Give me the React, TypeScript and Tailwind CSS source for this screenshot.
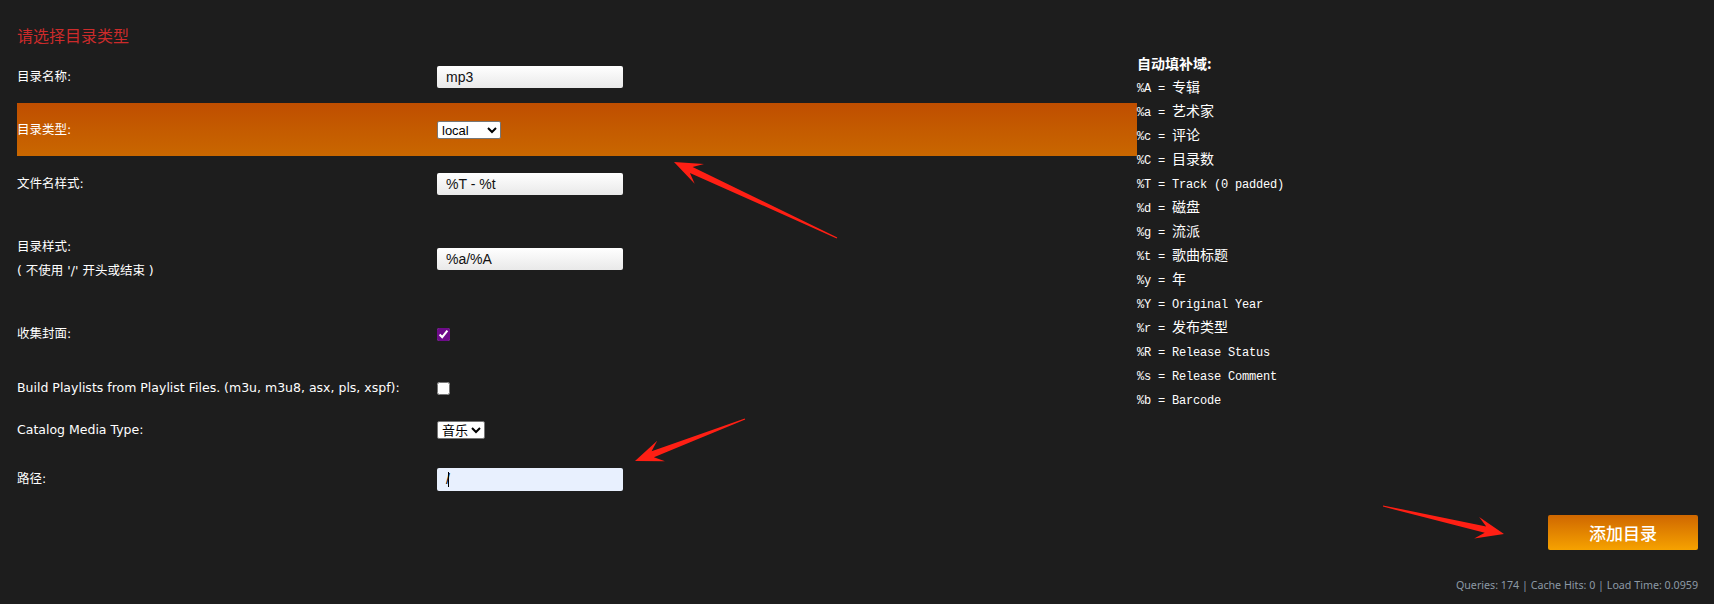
import type { ReactNode } from "react";
import clsx from "clsx";

const fields: [string, string][] = [
  ["%A", "专辑"],
  ["%a", "艺术家"],
  ["%c", "评论"],
  ["%C", "目录数"],
  ["%T", "Track (0 padded)"],
  ["%d", "磁盘"],
  ["%g", "流派"],
  ["%t", "歌曲标题"],
  ["%y", "年"],
  ["%Y", "Original Year"],
  ["%r", "发布类型"],
  ["%R", "Release Status"],
  ["%s", "Release Comment"],
  ["%b", "Barcode"],
];

const isCjk = (s: string) => /[\u4e00-\u9fff]/.test(s);

function Row({
  label,
  height,
  highlight,
  children,
}: {
  label: ReactNode;
  height: string;
  highlight?: boolean;
  children: ReactNode;
}) {
  return (
    <div
      className={clsx(
        "flex items-center",
        height,
        highlight && "bg-linear-to-b from-[#bf4e00] to-[#c96700]"
      )}
    >
      <div className="w-[420px] leading-[24px]">{label}</div>
      <div className="flex items-center">{children}</div>
    </div>
  );
}

function TextBox({ value }: { value: string }) {
  return (
    <input
      defaultValue={value}
      className="w-[186px] h-[22px] rounded-[2px] bg-linear-to-b from-white to-[#e9e9e9] pl-[9px] text-[14px] text-[#111] font-['Liberation_Sans',sans-serif] outline-none"
    />
  );
}

// arrow drawn like a screenshot annotation: thin tail, notched head
function arrowPoints(x1: number, y1: number, x2: number, y2: number) {
  const len = Math.hypot(x2 - x1, y2 - y1);
  const ux = (x2 - x1) / len;
  const uy = (y2 - y1) / len;
  const nx = -uy;
  const ny = ux;
  const L = 28;
  const W = 11;
  const neck = L * 0.68;
  const sw = 3.2;
  const tw = 0.6;
  const pt = (bx: number, by: number, along: number, side: number) =>
    `${(bx - ux * along + nx * side).toFixed(1)},${(by - uy * along + ny * side).toFixed(1)}`;
  return [
    pt(x1, y1, 0, tw),
    pt(x2, y2, neck, sw),
    pt(x2, y2, L, W),
    `${x2},${y2}`,
    pt(x2, y2, L, -W),
    pt(x2, y2, neck, -sw),
    pt(x1, y1, 0, -tw),
  ].join(" ");
}

export default function App() {
  return (
    <div className="relative w-[1714px] h-[604px] overflow-hidden bg-[#1d1d1d] text-white text-[12.5px] font-['DejaVu_Sans','Noto_Sans_CJK_SC',sans-serif]">
      <div className="flex">
        <div className="w-[1120px] ml-[17px]">
          <h2 className="h-[50px] pt-[25px] text-[16px] leading-[20px] text-[#cc2b2b] font-['Noto_Sans_CJK_SC',sans-serif]">
            请选择目录类型
          </h2>
          <Row label="目录名称:" height="h-[53px]">
            <TextBox value="mp3" />
          </Row>
          <Row label="目录类型:" height="h-[53px]" highlight>
            <select
              defaultValue="local"
              className="w-[64px] h-[18px] rounded-[2px] border border-[#767676] bg-white text-[13px] text-black font-['Liberation_Sans',sans-serif]"
            >
              <option value="local">local</option>
              <option value="remote">remote</option>
            </select>
          </Row>
          <Row label="文件名样式:" height="h-[56px]">
            <TextBox value="%T - %t" />
          </Row>
          <Row
            label={
              <>
                <div>目录样式:</div>
                <div>( 不使用 '/' 开头或结束 )</div>
              </>
            }
            height="h-[94px]"
          >
            <TextBox value="%a/%A" />
          </Row>
          <Row label="收集封面:" height="h-[56px]">
            <input type="checkbox" defaultChecked className="m-0 w-[13px] h-[13px] accent-[#6e0b8a]" />
          </Row>
          <Row label="Build Playlists from Playlist Files. (m3u, m3u8, asx, pls, xspf):" height="h-[52px]">
            <input type="checkbox" className="m-0 w-[13px] h-[13px]" />
          </Row>
          <Row label="Catalog Media Type:" height="h-[32px]">
            <select
              defaultValue="music"
              className="w-[48px] h-[18px] rounded-[2px] border border-[#767676] bg-white text-[13px] text-black font-['Liberation_Sans','Noto_Sans_CJK_SC',sans-serif]"
            >
              <option value="music">音乐</option>
              <option value="video">视频</option>
            </select>
          </Row>
          <Row label="路径:" height="h-[66px]">
            <div className="w-[186px] h-[23px] rounded-[2px] bg-[#e8f0fe] pl-[9px] flex items-center text-[14px] text-black font-['Liberation_Sans',sans-serif]">
              /<span className="w-px h-[15px] bg-black -ml-[2px]" />
            </div>
          </Row>
        </div>

        <div className="pt-[51px] text-[12px] tracking-[-0.2px] font-['Liberation_Mono','Noto_Sans_CJK_SC',monospace]">
          <div className="h-[26px] leading-[24px] text-[14px] tracking-normal font-bold font-['Noto_Sans_CJK_SC',sans-serif]">
            自动填补域:
          </div>
          {fields.map(([code, desc]) => (
            <div key={code} className="h-[24px] leading-[24px] whitespace-pre">
              {code} ={" "}
              <span className={clsx(isCjk(desc) && "text-[14px] leading-none tracking-normal font-['Noto_Sans_CJK_SC',sans-serif]")}>
                {desc}
              </span>
            </div>
          ))}
        </div>
      </div>

      <div className="flex justify-end pr-[16px] mt-[3px]">
        <button className="w-[150px] h-[35px] rounded-[2px] bg-linear-to-b from-[#cf6700] to-[#f6a200] text-[17px] font-medium text-white font-['Noto_Sans_CJK_SC',sans-serif]">
          添加目录
        </button>
      </div>

      <div className="mt-[27px] pr-[16px] text-right text-[10.7px] text-[#8c99a5] font-['Noto_Sans',sans-serif]">
        Queries: 174 | Cache Hits: 0 | Load Time: 0.0959
      </div>

      <svg className="absolute inset-0 pointer-events-none" width="1714" height="604">
        <polygon points={arrowPoints(837, 238, 674, 162)} fill="#ff1f14" />
        <polygon points={arrowPoints(745, 419, 635, 461)} fill="#ff1f14" />
        <polygon points={arrowPoints(1383, 506, 1504, 534)} fill="#ff1f14" />
      </svg>
    </div>
  );
}
